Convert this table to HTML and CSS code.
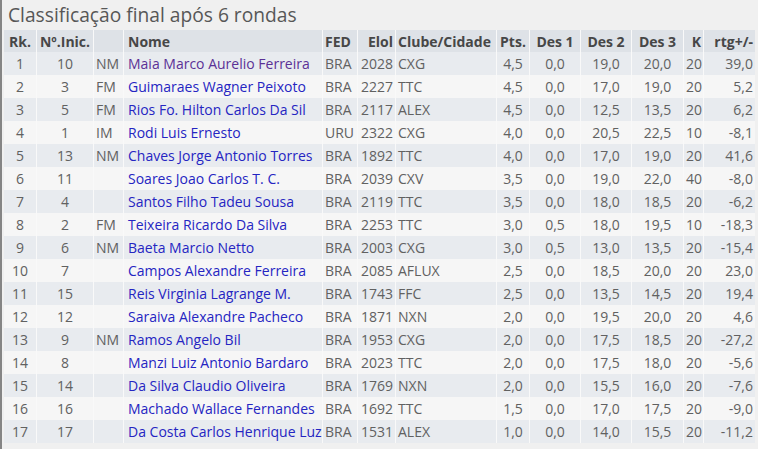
FILE: index.html
```html
<!DOCTYPE html>
<html lang="pt">
<head>
<meta charset="utf-8">
<title>Classificação final</title>
<link rel="stylesheet" href="styles.css">
</head>
<body>
<div class="frame">
  <h1 class="title">Classificação final após 6 rondas</h1>
  <table class="standings">
    <colgroup>
      <col class="c-rk"><col class="c-no"><col class="c-tit"><col class="c-name"><col class="c-fed"><col class="c-elo"><col class="c-club"><col class="c-pts"><col class="c-des"><col class="c-des"><col class="c-des3"><col class="c-k"><col class="c-rtg">
    </colgroup>
    <thead>
      <tr>
        <th class="ctr">Rk.</th><th class="ctr">Nº.Inic.</th><th></th><th class="lft name">Nome</th><th class="lft">FED</th><th class="rgt">Elol</th><th class="lft">Clube/Cidade</th><th class="ctr">Pts.</th><th class="ctr">Des 1</th><th class="ctr">Des 2</th><th class="ctr">Des 3</th><th class="rgt">K</th><th class="rgt">rtg+/-</th>
      </tr>
    </thead>
    <tbody id="rows"></tbody>
  </table>
</div>
<script src="app.js"></script>
</body>
</html>
```
FILE: app.js
```js
const data = [
  ["1","10","NM","Maia Marco Aurelio Ferreira","BRA","2028","CXG","4,5","0,0","19,0","20,0","20","39,0",true],
  ["2","3","FM","Guimaraes Wagner Peixoto","BRA","2227","TTC","4,5","0,0","17,0","19,0","20","5,2"],
  ["3","5","FM","Rios Fo. Hilton Carlos Da Sil","BRA","2117","ALEX","4,5","0,0","12,5","13,5","20","6,2"],
  ["4","1","IM","Rodi Luis Ernesto","URU","2322","CXG","4,0","0,0","20,5","22,5","10","-8,1"],
  ["5","13","NM","Chaves Jorge Antonio Torres","BRA","1892","TTC","4,0","0,0","17,0","19,0","20","41,6"],
  ["6","11","","Soares Joao Carlos T. C.","BRA","2039","CXV","3,5","0,0","19,0","22,0","40","-8,0"],
  ["7","4","","Santos Filho Tadeu Sousa","BRA","2119","TTC","3,5","0,0","18,0","18,5","20","-6,2"],
  ["8","2","FM","Teixeira Ricardo Da Silva","BRA","2253","TTC","3,0","0,5","18,0","19,5","10","-18,3"],
  ["9","6","NM","Baeta Marcio Netto","BRA","2003","CXG","3,0","0,5","13,0","13,5","20","-15,4"],
  ["10","7","","Campos Alexandre Ferreira","BRA","2085","AFLUX","2,5","0,0","18,5","20,0","20","23,0"],
  ["11","15","","Reis Virginia Lagrange M.","BRA","1743","FFC","2,5","0,0","13,5","14,5","20","19,4"],
  ["12","12","","Saraiva Alexandre Pacheco","BRA","1871","NXN","2,0","0,0","19,5","20,0","20","4,6"],
  ["13","9","NM","Ramos Angelo Bil","BRA","1953","CXG","2,0","0,0","17,5","18,5","20","-27,2"],
  ["14","8","","Manzi Luiz Antonio Bardaro","BRA","2023","TTC","2,0","0,0","17,5","18,0","20","-5,6"],
  ["15","14","","Da Silva Claudio Oliveira","BRA","1769","NXN","2,0","0,0","15,5","16,0","20","-7,6"],
  ["16","16","","Machado Wallace Fernandes","BRA","1692","TTC","1,5","0,0","17,0","17,5","20","-9,0"],
  ["17","17","","Da Costa Carlos Henrique Luz","BRA","1531","ALEX","1,0","0,0","14,0","15,5","20","-11,2"]
];
const align = ["ctr","ctr","lft","lft name","lft","rgt","lft","ctr","ctr","ctr","ctr","rgt","rgt"];
const tbody = document.getElementById("rows");
data.forEach(r => {
  const tr = document.createElement("tr");
  for (let i = 0; i < 13; i++) {
    const td = document.createElement("td");
    td.className = align[i];
    if (i === 3) {
      const a = document.createElement("a");
      a.href = "#";
      a.className = r[13] ? "player visited" : "player";
      a.textContent = r[i];
      td.appendChild(a);
    } else {
      td.textContent = r[i];
    }
    tr.appendChild(td);
  }
  tbody.appendChild(tr);
});
```
FILE: styles.css
```css
html, body {
  margin: 0;
  padding: 0;
  background: #f0f0f0;
}
.frame {
  border-left: 2px solid #858585;
  min-height: 449px;
  box-sizing: border-box;
  padding-left: 2px;
  font-family: "Open Sans", "Noto Sans", sans-serif;
  color: #616161;
}
.title {
  margin: 0;
  height: 30px;
  line-height: 29px;
  padding-left: 4px;
  font-size: 19.2px;
  font-weight: 400;
  color: #575757;
}
.standings {
  table-layout: fixed;
  border-collapse: separate;
  border-spacing: 0;
  width: 751px;
  font-size: 14px;
}
.c-rk { width: 33px; }
.c-no { width: 57px; }
.c-tit { width: 30px; }
.c-name { width: 199px; }
.c-fed { width: 35px; }
.c-elo { width: 38px; }
.c-club { width: 101px; }
.c-pts { width: 33px; }
.c-des { width: 51px; }
.c-des3 { width: 52px; }
.c-k { width: 20px; }
.c-rtg { width: 51px; }
.standings th, .standings td {
  padding: 0 2px;
  white-space: nowrap;
  overflow: hidden;
  border-right: 1px solid #f9f9f9;
}
.standings th.name, .standings td.name {
  padding: 0 0 0 4px;
}
.standings th:last-child, .standings td:last-child { border-right: 0; }
.standings th {
  height: 22px;
  background: #dee2e7;
  color: #474747;
  font-weight: 700;
}
.standings td {
  height: 23px;
  font-weight: 400;
}
.standings tbody tr:nth-child(odd) td { background: #e8ebef; }
.standings tbody tr:nth-child(even) td { background: #f6f6f6; }
.ctr { text-align: center; }
.lft { text-align: left; }
.rgt { text-align: right; }
.player {
  color: #2525c2;
  text-decoration: none;
}
.player.visited { color: #5b3196; }
```
